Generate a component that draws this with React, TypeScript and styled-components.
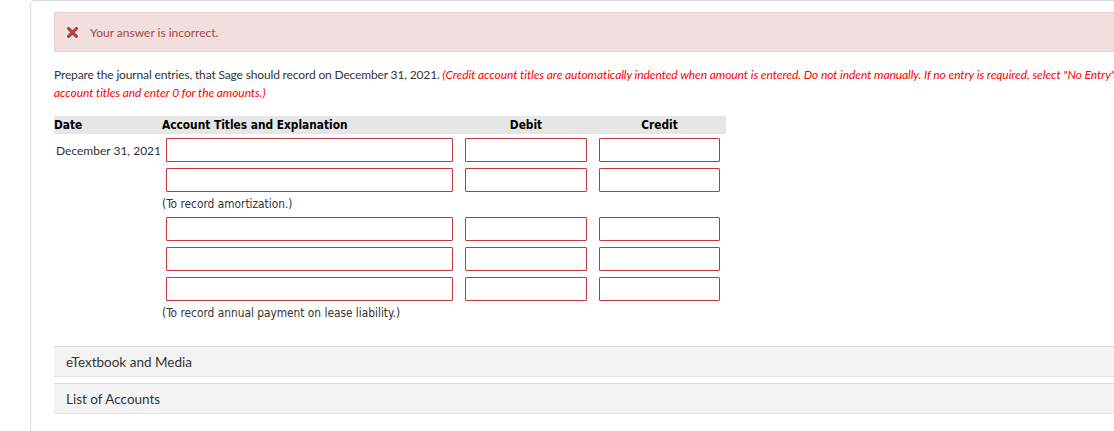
import React from "react";
import styled, { createGlobalStyle } from "styled-components";

const Global = createGlobalStyle`
  html, body { margin: 0; padding: 0; background: #fff; overflow: hidden; }
  body { font-family: Lato, "Liberation Sans", sans-serif; color: #333; }
`;

const Card = styled.div`
  margin-left: 30px;
  width: 1120px;
  min-height: 440px;
  border: 1px solid #dcdcdc;
  border-radius: 4px;
  box-sizing: border-box;
  padding: 11px 0 0 23px;
`;

const Alert = styled.div`
  display: flex;
  align-items: center;
  gap: 12px;
  height: 40px;
  box-sizing: border-box;
  border: 1px solid #ebcccc;
  background: #f2dede;
  padding-left: 12px;
  color: #a94442;
  font-size: 12px;
`;

const Prompt = styled.p`
  margin: 14px 0 0 0;
  font-size: 12px;
  letter-spacing: -0.15px;
  line-height: 18px;
  color: #333;
  white-space: nowrap;
`;

const Hint = styled.em`
  color: #f00;
  letter-spacing: -0.08px;
`;

const Journal = styled.div`
  margin-top: 14px;
  width: 672px;
  display: grid;
  grid-template-columns: 108px 297px 134px 133px;
  row-gap: 6px;
  font-family: "DejaVu Sans Condensed", "DejaVu Sans", sans-serif;
  font-size: 11.8px;
  color: #333;
`;

const Head = styled.div<{ $center?: boolean }>`
  background: #e6e6e6;
  height: 18px;
  line-height: 18px;
  font-weight: bold;
  color: #000;
  font-size: 11.8px;
  text-align: ${(p) => (p.$center ? "center" : "left")};
  margin-bottom: -2px;
`;

const DateCell = styled.div`
  font-family: Lato, "Liberation Sans", sans-serif;
  font-size: 12px;
  display: flex;
  align-items: center;
  padding-left: 2px;
`;

const Cell = styled.div<{ $center?: boolean }>`
  display: flex;
  justify-content: ${(p) => (p.$center ? "center" : "flex-start")};
`;

const Field = styled.input<{ $w: number }>`
  box-sizing: border-box;
  width: ${(p) => p.$w}px;
  height: 24px;
  margin: 0 0 0 ${(p) => (p.$w > 200 ? 4 : 0)}px;
  border: 1px solid #c4373a;
  border-radius: 1px;
  background: #fff;
  padding: 0 4px;
  outline: none;
`;

const Note = styled.div`
  grid-column: 2 / 5;
  height: 13px;
  line-height: 13px;
  font-size: 11.8px;
  color: #333;
`;

const Panels = styled.div`
  margin-top: 26px;
  display: flex;
  flex-direction: column;
  gap: 6px;
`;

const Panel = styled.div`
  height: 31px;
  box-sizing: border-box;
  background: #f3f3f3;
  border-top: 1px solid #dcdcdc;
  border-bottom: 1px solid #e6e6e6;
  display: flex;
  align-items: center;
  padding-left: 12px;
  font-size: 13.5px;
  color: #333;
`;

const XIcon = () => (
  <svg width="11" height="11" viewBox="0 0 11 11">
    <path d="M1.6 1.6 L9.4 9.4 M9.4 1.6 L1.6 9.4" stroke="#a94442" strokeWidth="3.2" strokeLinecap="square" />
  </svg>
);

type Row = { date?: string; note?: string };
const rows: Row[] = [
  { date: "December 31, 2021" },
  { note: "(To record amortization.)" },
  {},
  {},
  { note: "(To record annual payment on lease liability.)" },
];

export default function App() {
  return (
    <>
      <Global />
      <Card>
        <Alert>
          <XIcon />
          <span>Your answer is incorrect.</span>
        </Alert>
        <Prompt>
          Prepare the journal entries, that Sage should record on December 31, 2021.{" "}
          <Hint>
            (Credit account titles are automatically indented when amount is entered. Do not indent manually. If no entry is required, select "No Entry" for the
            <br />
            account titles and enter 0 for the amounts.)
          </Hint>
        </Prompt>
        <Journal>
          <Head>Date</Head>
          <Head>Account Titles and Explanation</Head>
          <Head $center>Debit</Head>
          <Head $center>Credit</Head>
          {rows.map((r, i) => (
            <React.Fragment key={i}>
              <DateCell>{r.date ?? ""}</DateCell>
              <Cell>
                <Field $w={287} />
              </Cell>
              <Cell $center>
                <Field $w={122} />
              </Cell>
              <Cell $center>
                <Field $w={121} />
              </Cell>
              {r.note && (
                <>
                  <div />
                  <Note>{r.note}</Note>
                </>
              )}
            </React.Fragment>
          ))}
        </Journal>
        <Panels>
          <Panel>eTextbook and Media</Panel>
          <Panel>List of Accounts</Panel>
        </Panels>
      </Card>
    </>
  );
}
